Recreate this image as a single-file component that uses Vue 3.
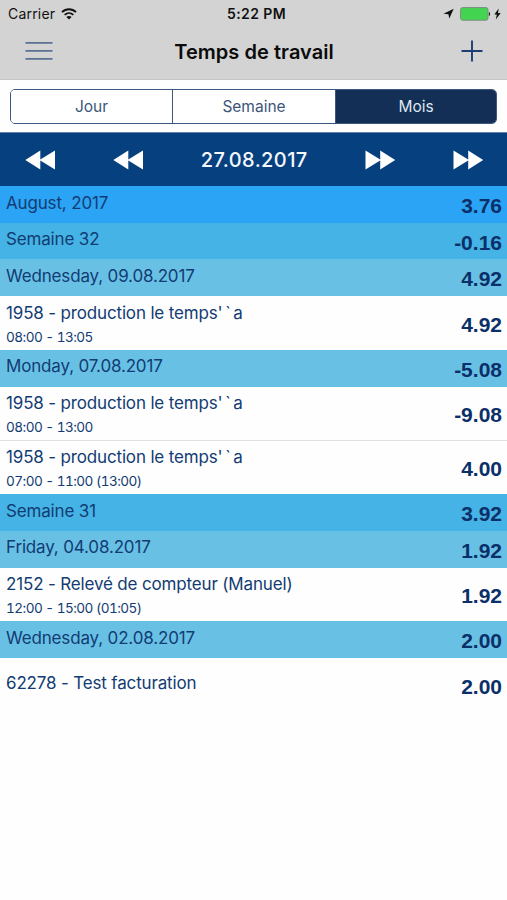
<script setup>
const tabs = ['Jour', 'Semaine', 'Mois']
const activeTab = 'Mois'
const rows = [
  { kind: 'month', title: 'August, 2017', value: '3.76' },
  { kind: 'week', title: 'Semaine 32', value: '-0.16' },
  { kind: 'day', title: 'Wednesday, 09.08.2017', value: '4.92' },
  { kind: 'entry', title: "1958 - production le temps'`a", time: '08:00 - 13:05', value: '4.92' },
  { kind: 'day', title: 'Monday, 07.08.2017', value: '-5.08' },
  { kind: 'entry', title: "1958 - production le temps'`a", time: '08:00 - 13:00', value: '-9.08' },
  { kind: 'entry', title: "1958 - production le temps'`a", time: '07:00 - 11:00 (13:00)', value: '4.00', divided: true },
  { kind: 'week', title: 'Semaine 31', value: '3.92' },
  { kind: 'day', title: 'Friday, 04.08.2017', value: '1.92' },
  { kind: 'entry', title: '2152 - Relevé de compteur (Manuel)', time: '12:00 - 15:00 (01:05)', value: '1.92' },
  { kind: 'day', title: 'Wednesday, 02.08.2017', value: '2.00' },
  { kind: 'entry', title: '62278 - Test facturation', value: '2.00' },
]
// Quote marks get their own span so they can be spaced wider than letters.
const pieces = (title) => title.split(/(['`]+)/).filter(Boolean)
</script>

<template>
  <div class="screen">
    <header class="top">
      <div class="status">
        <div class="carrier">
          <span>Carrier</span>
          <svg width="16" height="12" viewBox="0 0 16 12" fill="none" stroke="#111" stroke-width="1.9">
            <path d="M1 4.2C5 .2 11 .2 15 4.2" />
            <path d="M3.7 6.9c2.5-2.4 6.1-2.4 8.6 0" />
            <path d="M8 11.6 5.4 9c1.5-1.4 3.7-1.4 5.2 0z" fill="#111" stroke="none" />
          </svg>
        </div>
        <strong class="clock">5:22 PM</strong>
        <div class="power">
          <svg class="location" width="11" height="11" viewBox="0 0 11 11"><path d="M10.7.7 6.3 10.6 5.400 6.200.5 5.800z" fill="#111" /></svg>
          <svg class="battery" width="31" height="14" viewBox="0 0 31 14">
            <rect x=".6" y=".6" width="27.4" height="12.6" rx="2" fill="#43d551" stroke="#7c8c80" />
            <path d="M28.9 5c1.6.2 1.6 3.8 0 4z" fill="#222" />
          </svg>
          <svg class="bolt" width="7" height="12" viewBox="0 0 7 12"><path d="M4.7.5.3 6.5h2.5L1.8 11.5 6.7 5H4z" fill="#111" /></svg>
        </div>
      </div>
      <div class="titlebar">
        <svg class="menu" width="28" height="20" viewBox="0 0 28 20" stroke="#5b7192" stroke-width="1.9">
          <path d="M.5 1.9h27M.5 9.9h27M.5 17.9h27" />
        </svg>
        <h1>Temps de travail</h1>
        <svg class="plus" width="22" height="22" viewBox="0 0 22 22" stroke="#1b3e74" stroke-width="1.9">
          <path d="M.5 11h21M11 .5v21" />
        </svg>
      </div>
    </header>

    <div class="segments">
      <div class="segmented">
        <button v-for="t in tabs" :key="t" :class="{ active: t === activeTab }">{{ t }}</button>
      </div>
    </div>

    <nav class="dates">
      <svg v-for="n in 2" :key="'b' + n" class="arrow" width="31" height="20" viewBox="0 0 31 20"><path d="M.3 10 15.3.5V9.5L30 .5v19L15.3 10.5v9z" fill="#fff" /></svg>
      <span class="date">27.08.2017</span>
      <svg v-for="n in 2" :key="'f' + n" class="arrow" width="31" height="20" viewBox="0 0 31 20"><path d="M30.2 10 15.2.5V9.5L.5.5v19l14.7-9v9z" fill="#fff" /></svg>
    </nav>

    <main>
      <div v-for="(r, i) in rows" :key="i" class="row" :class="[r.kind, { divided: r.divided }]">
        <div class="label">
          <div class="title"><span v-for="(p, j) in pieces(r.title)" :key="j" :class="{ quotes: /['`]/.test(p) }">{{ p }}</span></div>
          <div v-if="r.time" class="time">{{ r.time }}</div>
        </div>
        <div class="value">{{ r.value }}</div>
      </div>
    </main>
  </div>
</template>

<style>
body { background: #fff; }
</style>

<style scoped>
.screen { width: 507px; height: 900px; overflow: hidden; background: #fefefe; font-family: Inter, "Liberation Sans", sans-serif; color: #123c73; }
.top { box-sizing: border-box; height: 80px; background: #d3d3d3; border-bottom: 1px solid #c4c4c4; }
.status { display: grid; grid-template-columns: 1fr auto 1fr; align-items: center; height: 27px; padding: 0 5px 0 8px; color: #111; font-size: 14px; }
.carrier { display: flex; align-items: center; gap: 6px; font-size: 14px; letter-spacing: 0.2px; }
.clock { padding-left: 3px; font-size: 14px; font-weight: 600; letter-spacing: 0.4px; }
.power { display: flex; align-items: center; justify-content: flex-end; }
.location { margin-right: 6px; }
.battery { margin-right: 3px; }
.bolt { margin-right: 1px; }
.titlebar { display: grid; grid-template-columns: 1fr auto 1fr; align-items: center; height: 48px; padding: 0 24px 0 25px; }
.plus { justify-self: end; }
h1 { margin: 2px 0 0; font-size: 20px; line-height: 24px; font-weight: 600; letter-spacing: 0.05px; color: #0b0b0b; }
.segments { box-sizing: border-box; height: 53px; padding: 9px 10px 8px; border-bottom: 1px solid #6484ab; }
.segmented { box-sizing: border-box; display: grid; grid-template-columns: 161px 163px 1fr; height: 35px; border: 1px solid #3d587f; border-radius: 5px; overflow: hidden; }
button { margin: 0; padding: 0; border: 0; border-left: 1px solid #3d587f; background: #fff; color: #3b5679; font: 400 15.5px/34px Inter, sans-serif; }
button:first-child { border-left: 0; }
button.active { background: #142f56; color: #dde6f0; }
.dates { display: flex; align-items: center; justify-content: space-between; height: 53px; padding: 0 23.5px 0 25px; background: #07407f; }
.date { color: #f4f8fc; font-size: 20px; font-weight: 500; letter-spacing: 0.4px; width: 108px; text-align: center; white-space: nowrap; }
.row { box-sizing: border-box; display: flex; justify-content: space-between; height: 36.7px; padding: 0 5px 0 6px; }
.month { background: #2ca4f5; }
.week { background: #45b3e5; }
.day { background: #68c1e5; }
.title { padding-top: 6.5px; font-size: 17px; line-height: 21px; letter-spacing: -0.16px; white-space: nowrap; }
.quotes { letter-spacing: 2.6px; }
.value { padding-top: 7px; font: 700 21px/25px "Liberation Sans", sans-serif; color: #0b3069; }
.entry { height: 53.8px; }
.entry .value { padding-top: 15.5px; }
.entry.divided { box-shadow: inset 0 1px #dfe1e4; }
.time { margin-top: 4px; font-size: 13.6px; line-height: 18px; letter-spacing: -0.55px; font-variant-numeric: tabular-nums; }
.entry .title:only-child { padding-top: 14.5px; }
</style>
